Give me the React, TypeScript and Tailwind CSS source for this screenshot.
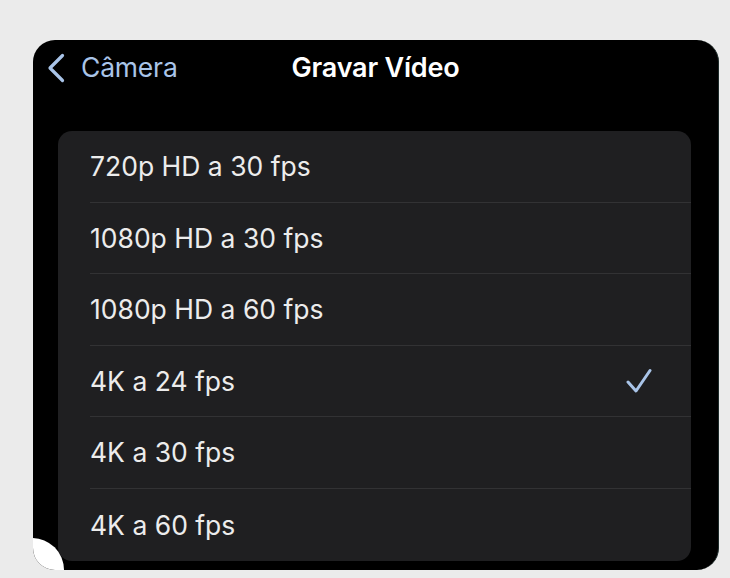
const options = [
  { label: "720p HD a 30 fps", selected: false },
  { label: "1080p HD a 30 fps", selected: false },
  { label: "1080p HD a 60 fps", selected: false },
  { label: "4K a 24 fps", selected: true },
  { label: "4K a 30 fps", selected: false },
  { label: "4K a 60 fps", selected: false },
];

export default function App() {
  return (
    <div className="min-h-screen h-[578px] bg-[#ebebeb] pt-[40px] pl-[33px] pr-[11px] pb-[8px] font-['Inter',sans-serif]">
      <div className="relative h-[530px] bg-black rounded-[22px] overflow-hidden border-r border-[#1d2b2a]">
        {/* Nav bar */}
        <div className="relative flex items-center h-[56px] px-[14px]">
          <div className="flex items-center gap-[16px] text-[#a9c4e8]">
            <svg width="18" height="30" viewBox="0 0 18 30" fill="none">
              <polyline
                points="15.5,2.5 3,15 15.5,27.5"
                stroke="currentColor"
                strokeWidth="3.2"
                strokeLinecap="round"
                strokeLinejoin="round"
              />
            </svg>
            <span className="text-[26.5px] tracking-[-0.2px]">Câmera</span>
          </div>
          <h1 className="absolute left-0 right-0 text-center text-white text-[27px] font-semibold tracking-[-0.2px] pointer-events-none">
            Gravar Vídeo
          </h1>
        </div>

        {/* Options list */}
        <div className="mt-[35px] ml-[25px] mr-[27px] bg-[#1f1f21] rounded-[14px] overflow-hidden">
          {options.map(({ label, selected }, idx) => (
            <div key={idx} className="pl-[32px]">
              <div
                className={`flex items-center justify-between h-[71.6px] pr-[39px] ${
                  idx < options.length - 1 ? "border-b border-[#323234]" : ""
                }`}
              >
                <span className="text-[26.5px] text-[#ececec] tracking-[0px] leading-none">{label}</span>
                {selected && (
                  <svg width="26" height="26" viewBox="0 0 26 26" fill="none" className="text-[#a9c4e8]">
                    <polyline
                      points="2,14 10,23 24,2.5"
                      stroke="currentColor"
                      strokeWidth="3"
                      strokeLinecap="round"
                      strokeLinejoin="round"
                    />
                  </svg>
                )}
              </div>
            </div>
          ))}
        </div>

        {/* white blob over the bottom-left corner */}
        <div className="absolute -left-[33px] top-[498px] w-[64px] h-[64px] rounded-full bg-white" />
      </div>
    </div>
  );
}
